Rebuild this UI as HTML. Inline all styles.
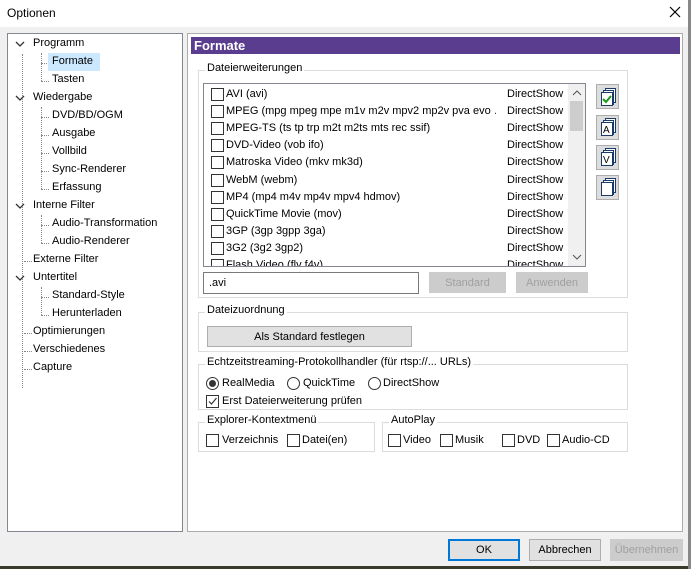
<!DOCTYPE html>
<html><head><style>
*{box-sizing:border-box;margin:0;padding:0}
body{width:691px;height:569px;background:#f0f0f0;font-family:"Liberation Sans",sans-serif;font-size:11px;color:#000;position:relative;overflow:hidden}
.a{position:absolute;white-space:nowrap}
.box{position:absolute;border:1px solid #828790;background:#fff}
.grp{position:absolute;border:1px solid #dcdcdc}
.gl{position:absolute;background:#fff;padding:0 2px;top:-9px;left:6px}
.cb{position:absolute;width:13px;height:13px;border:1px solid #333;background:#fff}
.rb{position:absolute;width:13px;height:13px;border:1px solid #333;border-radius:50%;background:#fff}
.btn{position:absolute;border:1px solid #adadad;background:#e1e1e1;text-align:center;line-height:20px}
.dis{color:#a0a0a0;border-color:#cccccc;background:#cccccc}
.dot{position:absolute;border-left:1px dotted #888}
.doth{position:absolute;border-top:1px dotted #888}
.ex{position:absolute}
</style></head><body>
<div class="a" style="left:0;top:0;width:691px;height:27px;background:#fff"></div>
<div class="a" style="left:7px;top:6px;font-size:12px">Optionen</div>
<svg class="a" style="left:669px;top:6px" width="12" height="12"><path d="M1 1L11 11M11 1L1 11" stroke="#000" stroke-width="1.2"/></svg>
<div class="a" style="left:0;top:566px;width:691px;height:3px;background:#3a3a2a"></div>
<div class="a" style="left:688px;top:0;width:3px;height:569px;background:#888"></div>

<!-- tree -->
<div class="box" style="left:7px;top:33px;width:176px;height:499px">
<div class="dot" style="left:14px;top:20px;height:334px"></div>
<div class="dot" style="left:33px;top:19px;height:28px"></div>
<div class="doth" style="left:33px;top:29px;width:8px"></div>
<div class="doth" style="left:33px;top:47px;width:8px"></div>
<div class="dot" style="left:33px;top:73px;height:82px"></div>
<div class="doth" style="left:33px;top:83px;width:8px"></div>
<div class="doth" style="left:33px;top:101px;width:8px"></div>
<div class="doth" style="left:33px;top:119px;width:8px"></div>
<div class="doth" style="left:33px;top:137px;width:8px"></div>
<div class="doth" style="left:33px;top:155px;width:8px"></div>
<div class="dot" style="left:33px;top:181px;height:28px"></div>
<div class="doth" style="left:33px;top:191px;width:8px"></div>
<div class="doth" style="left:33px;top:209px;width:8px"></div>
<div class="doth" style="left:16px;top:227px;width:8px"></div>
<div class="dot" style="left:33px;top:253px;height:28px"></div>
<div class="doth" style="left:33px;top:263px;width:8px"></div>
<div class="doth" style="left:33px;top:281px;width:8px"></div>
<div class="doth" style="left:16px;top:299px;width:8px"></div>
<div class="doth" style="left:16px;top:317px;width:8px"></div>
<div class="doth" style="left:16px;top:335px;width:8px"></div>
</div>
<div class="a" style="left:48px;top:53px;width:52px;height:18px;background:#cce8ff"></div>
<svg class="a" style="left:15px;top:40px" width="10" height="340"><g stroke="#333" stroke-width="1.3" fill="none"><path d="M1 2l4 4 4-4"/><path d="M1 56l4 4 4-4"/><path d="M1 164l4 4 4-4"/><path d="M1 236l4 4 4-4"/></g></svg>
<div class="a" style="left:33px;top:37px">Programm</div>
<div class="a" style="left:52px;top:55px">Formate</div>
<div class="a" style="left:52px;top:73px">Tasten</div>
<div class="a" style="left:33px;top:91px">Wiedergabe</div>
<div class="a" style="left:52px;top:109px">DVD/BD/OGM</div>
<div class="a" style="left:52px;top:127px">Ausgabe</div>
<div class="a" style="left:52px;top:145px">Vollbild</div>
<div class="a" style="left:52px;top:163px">Sync-Renderer</div>
<div class="a" style="left:52px;top:181px">Erfassung</div>
<div class="a" style="left:33px;top:199px">Interne Filter</div>
<div class="a" style="left:52px;top:217px">Audio-Transformation</div>
<div class="a" style="left:52px;top:235px">Audio-Renderer</div>
<div class="a" style="left:33px;top:253px">Externe Filter</div>
<div class="a" style="left:33px;top:271px">Untertitel</div>
<div class="a" style="left:52px;top:289px">Standard-Style</div>
<div class="a" style="left:52px;top:307px">Herunterladen</div>
<div class="a" style="left:33px;top:325px">Optimierungen</div>
<div class="a" style="left:33px;top:343px">Verschiedenes</div>
<div class="a" style="left:33px;top:361px">Capture</div>

<!-- panel -->
<div class="box" style="left:187px;top:33px;width:496px;height:499px;border-color:#adadad"></div>
<div class="a" style="left:191px;top:37px;width:489px;height:17px;background:#5a3d8f;color:#fff;font-weight:bold;font-size:13px;padding:1px 3px">Formate</div>

<div class="grp" style="left:198px;top:70px;width:430px;height:228px"><div class="gl">Dateierweiterungen</div></div>
<div class="box" style="left:203px;top:83px;width:383px;height:184px;overflow:hidden">
<div class="a" style="left:364px;top:0;width:17px;height:182px;background:#f0f0f0"></div>
<div class="a" style="left:366px;top:17px;width:13px;height:30px;background:#cdcdcd"></div>
<svg class="a" style="left:368px;top:5px" width="10" height="175"><g stroke="#555" fill="none"><path d="M1 6l4-4 4 4"/><path d="M1 166l4 4 4-4"/></g></svg>
</div>
<div id="rows"></div>
<div class="btn" style="left:596px;top:84px;width:23px;height:25px;background:#ddd"></div>
<div class="btn" style="left:596px;top:115px;width:23px;height:25px;background:#ddd"></div>
<div class="btn" style="left:596px;top:145px;width:23px;height:25px;background:#ddd"></div>
<div class="btn" style="left:596px;top:175px;width:23px;height:25px;background:#ddd"></div>
<svg class="a" style="left:596px;top:84px" width="24" height="120">
<g fill="#fff" stroke="#1a3a6a" stroke-width="1">
<rect x="9.5" y="4.5" width="10" height="14"/><rect x="7.5" y="6.5" width="10" height="14"/><rect x="5.5" y="8.5" width="11" height="13"/>
<rect x="9.5" y="34.5" width="10" height="14"/><rect x="7.5" y="36.5" width="10" height="14"/><rect x="5.5" y="38.5" width="11" height="13"/>
<rect x="9.5" y="64.5" width="10" height="14"/><rect x="7.5" y="66.5" width="10" height="14"/><rect x="5.5" y="68.5" width="11" height="13"/>
<rect x="9.5" y="94.5" width="10" height="14"/><rect x="7.5" y="96.5" width="10" height="14"/><rect x="5.5" y="98.5" width="11" height="13"/>
</g>
<path d="M7 15l3 3 5-6" stroke="#1a9a1a" stroke-width="2" fill="none"/>
<text x="7" y="49" font-size="10" font-family="Liberation Sans">A</text>
<text x="7" y="79" font-size="10" font-family="Liberation Sans">V</text>
</svg>
<div class="box" style="left:203px;top:272px;width:216px;height:22px;border-color:#7a7a7a;padding:4px 5px">.avi</div>
<div class="btn dis" style="left:429px;top:272px;width:77px;height:21px">Standard</div>
<div class="btn dis" style="left:516px;top:272px;width:72px;height:21px">Anwenden</div>

<div class="grp" style="left:198px;top:312px;width:430px;height:40px"><div class="gl">Dateizuordnung</div></div>
<div class="btn" style="left:207px;top:326px;width:205px;height:21px">Als Standard festlegen</div>

<div class="grp" style="left:198px;top:364px;width:430px;height:46px"><div class="gl">Echtzeitstreaming-Protokollhandler (für rtsp://... URLs)</div></div>
<div class="rb" style="left:206px;top:377px"></div><div class="a" style="left:209px;top:380px;width:7px;height:7px;border-radius:50%;background:#333"></div>
<div class="a" style="left:222px;top:377px">RealMedia</div>
<div class="rb" style="left:287px;top:377px"></div><div class="a" style="left:303px;top:377px">QuickTime</div>
<div class="rb" style="left:368px;top:377px"></div><div class="a" style="left:383px;top:377px">DirectShow</div>
<div class="cb" style="left:206px;top:395px"></div>
<svg class="a" style="left:207px;top:396px" width="11" height="11"><path d="M2 5.5l2.5 2.5 5-6" stroke="#333" fill="none" stroke-width="1.2"/></svg>
<div class="a" style="left:222px;top:395px">Erst Dateierweiterung prüfen</div>

<div class="grp" style="left:198px;top:422px;width:177px;height:30px"><div class="gl">Explorer-Kontextmenü</div></div>
<div class="cb" style="left:206px;top:434px"></div><div class="a" style="left:222px;top:434px">Verzeichnis</div>
<div class="cb" style="left:287px;top:434px"></div><div class="a" style="left:302px;top:434px">Datei(en)</div>
<div class="grp" style="left:382px;top:422px;width:246px;height:30px"><div class="gl">AutoPlay</div></div>
<div class="cb" style="left:388px;top:434px"></div><div class="a" style="left:403px;top:434px">Video</div>
<div class="cb" style="left:440px;top:434px"></div><div class="a" style="left:455px;top:434px">Musik</div>
<div class="cb" style="left:502px;top:434px"></div><div class="a" style="left:517px;top:434px">DVD</div>
<div class="cb" style="left:547px;top:434px"></div><div class="a" style="left:562px;top:434px">Audio-CD</div>

<div class="btn" style="left:448px;top:539px;width:72px;height:22px;border:2px solid #0078d7;line-height:18px">OK</div>
<div class="btn" style="left:529px;top:539px;width:72px;height:22px">Abbrechen</div>
<div class="btn dis" style="left:610px;top:539px;width:73px;height:22px">Übernehmen</div>

<script>
var r=["AVI (avi)","MPEG (mpg mpeg mpe m1v m2v mpv2 mp2v pva evo …","MPEG-TS (ts tp trp m2t m2ts mts rec ssif)","DVD-Video (vob ifo)","Matroska Video (mkv mk3d)","WebM (webm)","MP4 (mp4 m4v mp4v mpv4 hdmov)","QuickTime Movie (mov)","3GP (3gp 3gpp 3ga)","3G2 (3g2 3gp2)","Flash Video (flv f4v)"],h="";
r.forEach(function(t,i){var y=88+i*17.1;h+='<div class="cb" style="left:211px;top:'+y+'px"></div><div class="a" style="left:226px;top:'+y+'px;width:270px;overflow:hidden">'+t+'</div><div class="a" style="left:507px;top:'+y+'px">DirectShow</div>';});
var d=document.getElementById('rows');d.outerHTML='<div class="a" style="left:204px;top:84px;width:364px;height:182px;overflow:hidden"><div class="a" style="left:-204px;top:-84px;width:600px;height:300px">'+h+'</div></div>';
</script>
</body></html>
